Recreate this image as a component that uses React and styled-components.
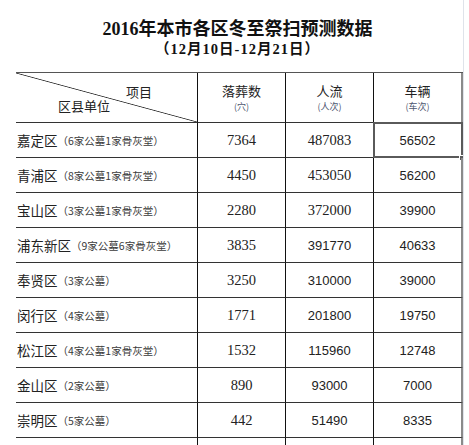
import React from 'react';
import styled, { createGlobalStyle } from 'styled-components';

const GlobalStyle = createGlobalStyle`
  html, body { margin: 0; padding: 0; background: #fff; }
  body { font-family: "Noto Sans CJK SC", "Liberation Sans", sans-serif; color: #222; }
`;

const Page = styled.div`
  width: 464px;
  height: 445px;
  box-sizing: border-box;
  padding-left: 16px;
  border-right: 1px solid #dfe3ea;
  overflow: hidden;
`;

const Heading = styled.header`
  width: 447px;
  height: 72px;
  box-sizing: border-box;
  padding: 19px 4px 0 0;
  text-align: center;
`;

const Title = styled.h1`
  margin: 0;
  font: bold 18px/20px "Liberation Serif", "Noto Sans CJK SC", serif;
  color: #111;
`;

const Subtitle = styled.div`
  margin-top: 2px;
  font: bold 14.5px/16px "Liberation Serif", "Noto Sans CJK SC", serif;
  letter-spacing: 1px;
  color: #111;
`;

const Grid = styled.div`
  display: grid;
  grid-template-columns: 182px 88px 88px 89px;
  width: 447px;
  border-top: 1px solid #555;
`;

const BaseCell = styled.div`
  position: relative;
  box-sizing: border-box;
  height: ${p => p.$h || 35}px;
  border-bottom: 1px solid #333;
  border-right: ${p => (p.$last ? '2px solid #8a8a8a' : '1px solid #111')};
  display: flex;
  align-items: center;
`;

const Corner = styled(BaseCell)`
  flex-direction: column;
  align-items: flex-start;
  padding-top: 12px;
  background: linear-gradient(
    to top right,
    transparent calc(50% - 0.8px),
    #333 50%,
    transparent calc(50% + 0.8px)
  );
  font-size: 13px;
  line-height: 14px;
  color: #222;
`;

const CornerLine = styled.span`
  padding-left: ${p => p.$indent}px;
`;

const HeadCell = styled(BaseCell)`
  flex-direction: column;
  justify-content: center;
`;

const HeadMain = styled.span`
  font-size: 13px;
  line-height: 16px;
  color: #222;
`;

const HeadSub = styled.span`
  margin-top: 2px;
  font-size: 9px;
  line-height: 12px;
  color: #4d5670;
`;

const LabelCell = styled(BaseCell)`
  padding-left: 1px;
  white-space: nowrap;
`;

const Name = styled.span`
  font-size: 13.5px;
  color: #222;
`;

const Note = styled.span`
  font-size: 10.5px;
  color: #3a3a3a;
`;

const NumCell = styled(BaseCell)`
  justify-content: center;
  color: #222;
  font: ${p => (p.$serif ? '14.5px "Liberation Serif", serif' : '13px "Liberation Sans", sans-serif')};
  ${p =>
    p.$selected &&
    `
    &::before {
      content: '';
      position: absolute;
      left: -1px;
      top: -1px;
      right: -2px;
      bottom: -1px;
      border: 2px solid #5a5a5a;
    }
    &::after {
      content: '';
      position: absolute;
      right: -4px;
      bottom: -4px;
      width: 4px;
      height: 4px;
      background: #5a5a5a;
      border: 1px solid #fff;
    }
  `}
`;

const rows = [
  ['嘉定区', '（6家公墓1家骨灰堂）', '7364', '487083', '56502', true],
  ['青浦区', '（8家公墓1家骨灰堂）', '4450', '453050', '56200', true],
  ['宝山区', '（3家公墓1家骨灰堂）', '2280', '372000', '39900', true],
  ['浦东新区', '（9家公墓6家骨灰堂）', '3835', '391770', '40633', false],
  ['奉贤区', '（3家公墓）', '3250', '310000', '39000', false],
  ['闵行区', '（4家公墓）', '1771', '201800', '19750', false],
  ['松江区', '（4家公墓1家骨灰堂）', '1532', '115960', '12748', false],
  ['金山区', '（2家公墓）', '890', '93000', '7000', false],
  ['崇明区', '（5家公墓）', '442', '51490', '8335', false],
];

const heads = [
  ['落葬数', '(穴)'],
  ['人流', '(人次)'],
  ['车辆', '(车次)'],
];

export default function App() {
  return (
    <>
      <GlobalStyle />
      <Page>
        <Heading>
          <Title>2016年本市各区冬至祭扫预测数据</Title>
          <Subtitle>（12月10日-12月21日）</Subtitle>
        </Heading>
        <Grid>
          <Corner $h={50}>
            <CornerLine $indent={110}>项目</CornerLine>
            <CornerLine $indent={42}>区县单位</CornerLine>
          </Corner>
          {heads.map(([m, s], i) => (
            <HeadCell key={m} $h={50} $last={i === 2}>
              <HeadMain>{m}</HeadMain>
              <HeadSub>{s}</HeadSub>
            </HeadCell>
          ))}
          {rows.map(([name, note, a, b, c, serif3], r) => (
            <React.Fragment key={name}>
              <LabelCell>
                <Name>{name}</Name>
                <Note>{note}</Note>
              </LabelCell>
              <NumCell $serif>{a}</NumCell>
              <NumCell $serif={serif3}>{b}</NumCell>
              <NumCell $last $selected={r === 0}>{c}</NumCell>
            </React.Fragment>
          ))}
          <LabelCell />
          <NumCell />
          <NumCell />
          <NumCell $last />
        </Grid>
      </Page>
    </>
  );
}
